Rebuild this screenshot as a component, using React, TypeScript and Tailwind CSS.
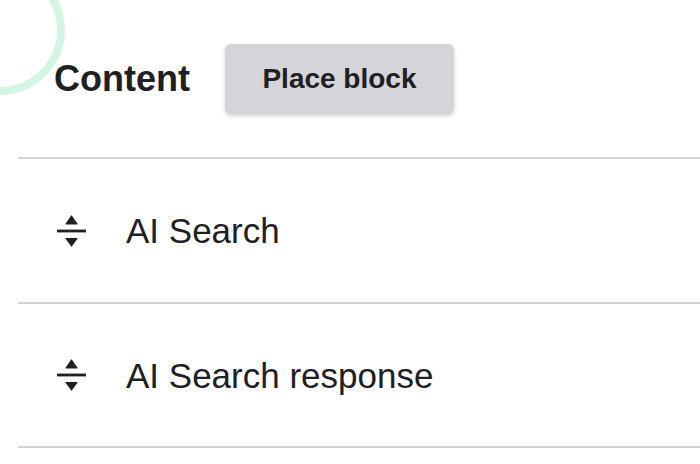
import React from "react";

function SortIcon() {
  return (
    <svg width="31" height="32" viewBox="0 0 31 32" className="shrink-0">
      <path d="M15.5 1 L21 9 L10 9 Z" fill="#1f2023" strokeLinejoin="round" stroke="#1f2023" strokeWidth="1.2" />
      <rect x="1" y="14.6" width="29" height="2.8" fill="#1f2023" />
      <path d="M10 23.5 L21 23.5 L15.5 31 Z" fill="#1f2023" strokeLinejoin="round" stroke="#1f2023" strokeWidth="1.2" />
    </svg>
  );
}

function Row({ label, h }: { label: string; h: string }) {
  return (
    <div className={`flex ${h} items-center gap-[39px] border-b-2 border-[#d4d4d8] pl-[38px]`}>
      <SortIcon />
      <span className="text-[35px] leading-none text-[#1f2023]">{label}</span>
    </div>
  );
}

export default function App() {
  return (
    <div
      className="relative h-[464px] w-[700px] overflow-hidden bg-white pl-[18px]"
      style={{ fontFamily: '"Liberation Sans", Arial, sans-serif' }}
    >
      <div className="pointer-events-none absolute left-[-65px] top-[-35px] h-[130px] w-[130px] rounded-full border-[8px] border-[#d3f6e2] blur-[0.6px]" />
      <div className="relative flex h-[159px] items-center gap-[35px] border-b-2 border-[#d4d4d8] pl-[36px]">
        <h2 className="text-[36px] font-bold leading-none text-[#1f2023]">Content</h2>
        <button className="flex h-[70px] w-[229px] items-center justify-center rounded-md bg-[#d4d4d9] text-[28px] font-bold text-[#1f2023] shadow-[0_2px_4px_rgba(0,0,0,0.18)]">
          Place block
        </button>
      </div>
      <Row label="AI Search" h="h-[145px]" />
      <Row label="AI Search response" h="h-[144px]" />
    </div>
  );
}
